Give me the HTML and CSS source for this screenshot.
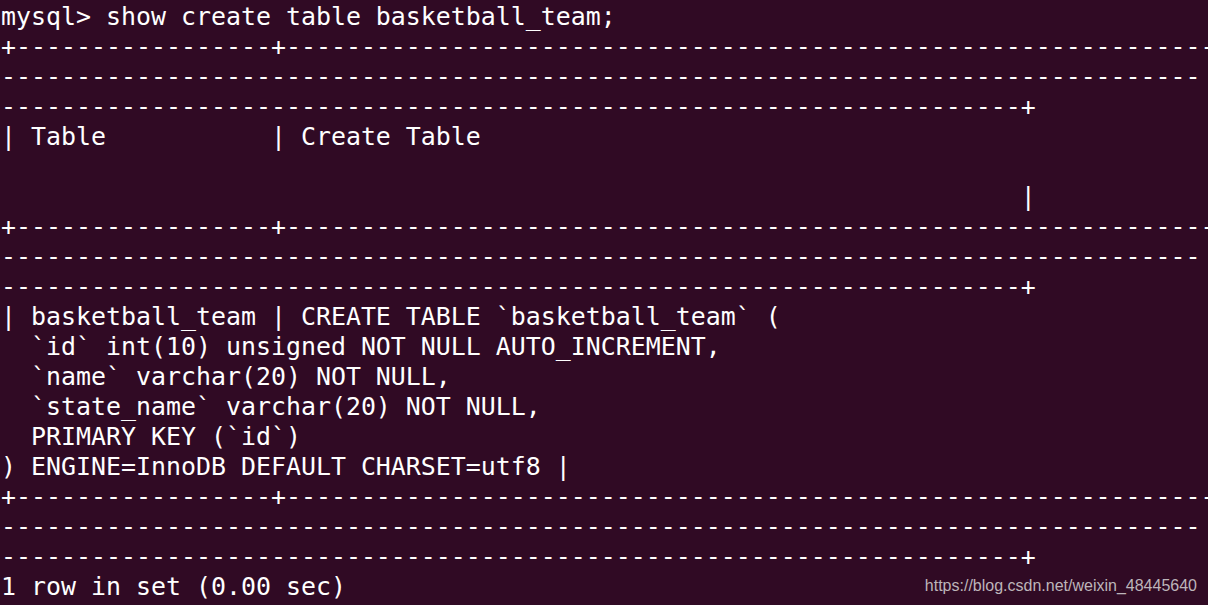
FILE: index.html
```html
<!DOCTYPE html>
<html>
<head>
<meta charset="utf-8">
<link rel="stylesheet" href="styles.css">
</head>
<body>
<div class="terminal">
<pre class="screen">mysql&gt; show create table basketball_team;
+-----------------+--------------------------------------------------------------
--------------------------------------------------------------------------------
--------------------------------------------------------------------+
| Table           | Create Table

                                                                    |
+-----------------+--------------------------------------------------------------
--------------------------------------------------------------------------------
--------------------------------------------------------------------+
| basketball_team | CREATE TABLE `basketball_team` (
  `id` int(10) unsigned NOT NULL AUTO_INCREMENT,
  `name` varchar(20) NOT NULL,
  `state_name` varchar(20) NOT NULL,
  PRIMARY KEY (`id`)
) ENGINE=InnoDB DEFAULT CHARSET=utf8 |
+-----------------+--------------------------------------------------------------
--------------------------------------------------------------------------------
--------------------------------------------------------------------+
1 row in set (0.00 sec)</pre>
<div class="watermark">https://blog.csdn.net/weixin_48445640</div>
</div>
</body>
</html>
```

FILE: styles.css
```css
html, body {
  margin: 0;
  padding: 0;
  background: #300a24;
}
.terminal {
  position: relative;
  width: 1208px;
  height: 605px;
  overflow: hidden;
  background: #300a24;
}
.screen {
  margin: 0;
  padding: 2px 0 0 1px;
  font-family: "DejaVu Sans Mono", monospace;
  font-size: 24.92px;
  line-height: 30px;
  color: #ffffff;
  white-space: pre;
  overflow: hidden;
}
.watermark {
  position: absolute;
  right: 11px;
  bottom: 9px;
  font-family: "Liberation Sans", Arial, sans-serif;
  font-size: 16px;
  line-height: 20px;
  color: #bdb5ba;
}
```
